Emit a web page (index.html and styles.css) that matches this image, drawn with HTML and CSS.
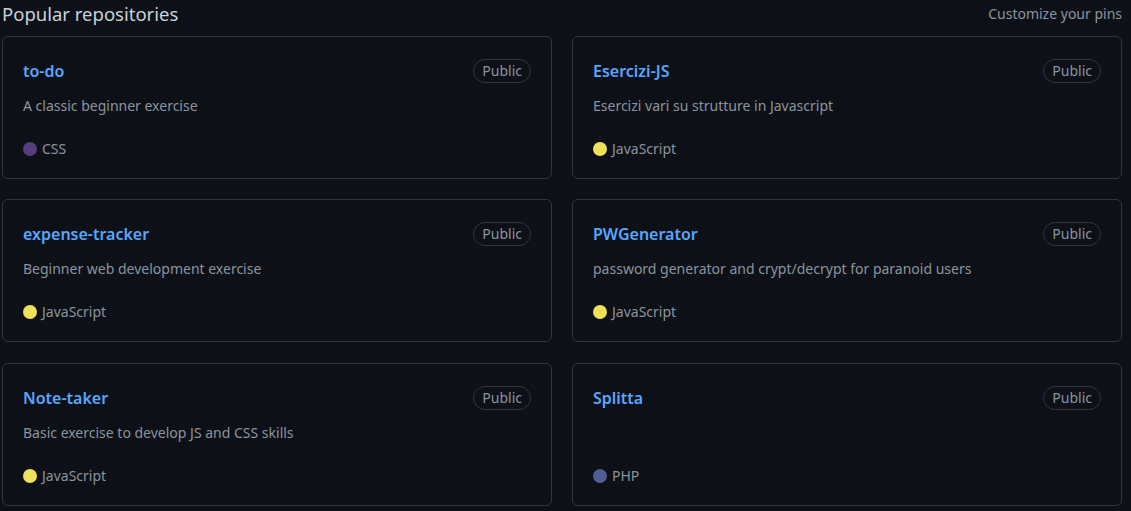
FILE: index.html
```html
<!DOCTYPE html>
<html lang="en">
<head>
<meta charset="utf-8">
<title>Popular repositories</title>
<link rel="stylesheet" href="styles.css">
</head>
<body>
<div class="pinned">
  <div class="pinned-head">
    <h2 class="pinned-title">Popular repositories</h2>
    <a class="customize" href="#">Customize your pins</a>
  </div>
  <ol class="pinned-grid">
    <li class="repo">
      <div class="repo-top"><a class="repo-name" href="#">to-do</a><span class="badge">Public</span></div>
      <p class="repo-desc">A classic beginner exercise</p>
      <p class="repo-lang"><span class="dot dot-css"></span>CSS</p>
    </li>
    <li class="repo">
      <div class="repo-top"><a class="repo-name" href="#">Esercizi-JS</a><span class="badge">Public</span></div>
      <p class="repo-desc">Esercizi vari su strutture in Javascript</p>
      <p class="repo-lang"><span class="dot dot-js"></span>JavaScript</p>
    </li>
    <li class="repo">
      <div class="repo-top"><a class="repo-name" href="#">expense-tracker</a><span class="badge">Public</span></div>
      <p class="repo-desc">Beginner web development exercise</p>
      <p class="repo-lang"><span class="dot dot-js"></span>JavaScript</p>
    </li>
    <li class="repo">
      <div class="repo-top"><a class="repo-name" href="#">PWGenerator</a><span class="badge">Public</span></div>
      <p class="repo-desc">password generator and crypt/decrypt for paranoid users</p>
      <p class="repo-lang"><span class="dot dot-js"></span>JavaScript</p>
    </li>
    <li class="repo">
      <div class="repo-top"><a class="repo-name" href="#">Note-taker</a><span class="badge">Public</span></div>
      <p class="repo-desc">Basic exercise to develop JS and CSS skills</p>
      <p class="repo-lang"><span class="dot dot-js"></span>JavaScript</p>
    </li>
    <li class="repo">
      <div class="repo-top"><a class="repo-name" href="#">Splitta</a><span class="badge">Public</span></div>
      <p class="repo-lang"><span class="dot dot-php"></span>PHP</p>
    </li>
  </ol>
</div>
</body>
</html>
```

FILE: styles.css
```css
html, body {
  margin: 0;
  padding: 0;
  background: #0d1117;
}
body {
  font-family: "Noto Sans", "Liberation Sans", sans-serif;
  color: #e6edf3;
}
.pinned {
  width: 1120px;
  padding-left: 2px;
}
.pinned-head {
  display: flex;
  justify-content: space-between;
  align-items: center;
  height: 27px;
  margin-bottom: 9px;
}
.pinned-title {
  margin: 0;
  font-size: 18.5px;
  font-weight: 400;
  color: #c9d1d9;
  line-height: 27px;
}
.customize {
  font-size: 14px;
  color: #8b949e;
  text-decoration: none;
}
.pinned-grid {
  list-style: none;
  margin: 0;
  padding: 0;
  display: grid;
  grid-template-columns: 550px 550px;
  column-gap: 20px;
  row-gap: 20.6px;
}
.repo {
  border: 1px solid #30363d;
  border-radius: 6px;
  padding: 22px 20px 18px 20px;
  display: flex;
  flex-direction: column;
  min-height: 100.8px;
}
.repo-top {
  display: flex;
  justify-content: space-between;
  align-items: center;
  height: 24px;
}
.repo-name {
  color: #58a6ff;
  font-weight: 600;
  font-size: 16px;
  text-decoration: none;
}
.badge {
  border: 1px solid #30363d;
  border-radius: 12px;
  padding: 0 8px;
  font-size: 14px;
  line-height: 22px;
  color: #8b949e;
}
.repo-desc {
  margin: 12px 0 0 0;
  font-size: 14px;
  line-height: 22px;
  color: #8b949e;
}
.repo-lang {
  margin: auto 0 0 0;
  display: flex;
  align-items: center;
  font-size: 14px;
  line-height: 22px;
  color: #8b949e;
}
.dot {
  width: 14px;
  height: 14px;
  border-radius: 50%;
  margin-right: 5px;
}
.dot-css { background: #563d7c; }
.dot-js { background: #f1e05a; }
.dot-php { background: #4f5d95; }
```
